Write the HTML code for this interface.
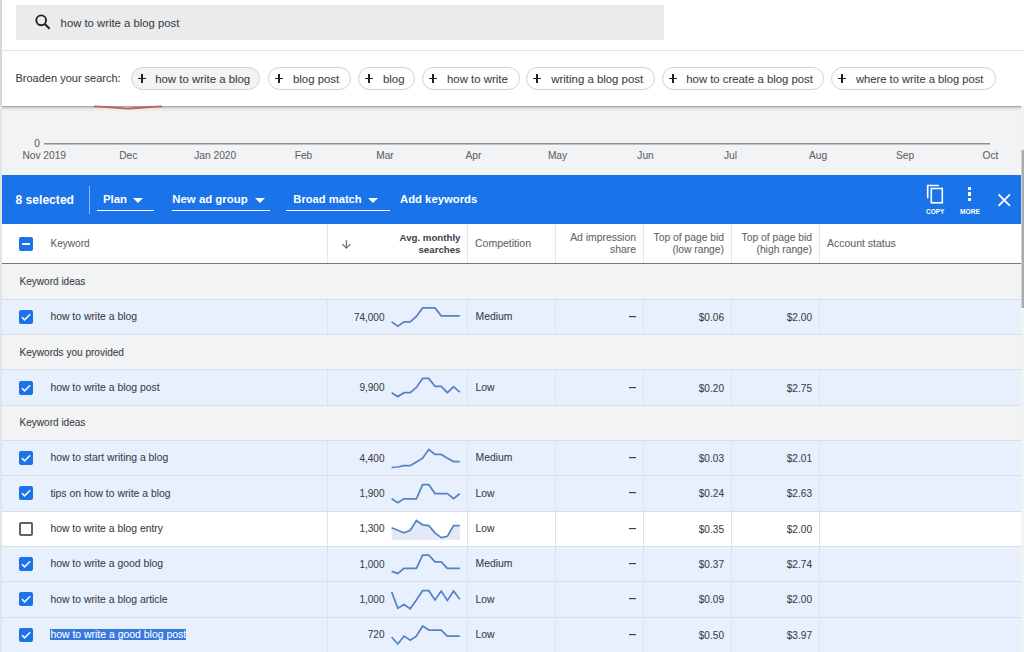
<!DOCTYPE html>
<html><head><meta charset="utf-8"><style>
html,body{margin:0;padding:0;}
body{width:1024px;height:652px;position:relative;overflow:hidden;background:#f1f3f4;font-family:"Liberation Sans",sans-serif;}
.t{position:absolute;line-height:1;white-space:nowrap;}
.n{-webkit-text-stroke:0.08px currentColor;}
.r{position:absolute;}
</style></head><body>
<div class="r" style="left:0px;top:0px;width:1024px;height:107px;background:#ffffff;"></div>
<div class="r" style="left:16px;top:5px;width:648px;height:35px;background:#e9ebed;"></div>
<svg class="r" style="left:33px;top:12px" width="20" height="20" viewBox="0 0 20 20"><circle cx="8.2" cy="8.3" r="4.9" fill="none" stroke="#202124" stroke-width="1.9"/><path d="M11.6 11.7 L16.6 16.7" stroke="#202124" stroke-width="2.1" stroke-linecap="butt"/></svg>
<div class="t n" style="left:60.60px;top:17.53px;font-size:11.3px;color:#3c4043;font-weight:400;">how to write a blog post</div>
<div class="r" style="left:2px;top:50px;width:1022px;height:1px;background:#e3e3e3;"></div>
<div class="t n" style="left:15.50px;top:73.49px;font-size:11.0px;color:#3c4043;font-weight:400;">Broaden your search:</div>
<div class="r" style="left:131px;top:67px;width:127px;height:20.5px;border:1px solid #d0d2d5;border-radius:12px;background:#f1f3f4"></div>
<div class="r" style="left:138.2px;top:77.7px;width:8.2px;height:1.6px;background:#202124;"></div>
<div class="r" style="left:141.4px;top:74.4px;width:1.6px;height:8.2px;background:#202124;"></div>
<div class="t n" style="left:155.20px;top:73.55px;font-size:11.4px;color:#3c4043;font-weight:400;">how to write a blog</div>
<div class="r" style="left:268px;top:67px;width:81px;height:20.5px;border:1px solid #d0d2d5;border-radius:12px;background:#ffffff"></div>
<div class="r" style="left:275.2px;top:77.7px;width:8.2px;height:1.6px;background:#202124;"></div>
<div class="r" style="left:278.4px;top:74.4px;width:1.6px;height:8.2px;background:#202124;"></div>
<div class="t n" style="left:293.00px;top:73.55px;font-size:11.4px;color:#3c4043;font-weight:400;">blog post</div>
<div class="r" style="left:358px;top:67px;width:55px;height:20.5px;border:1px solid #d0d2d5;border-radius:12px;background:#ffffff"></div>
<div class="r" style="left:365.2px;top:77.7px;width:8.2px;height:1.6px;background:#202124;"></div>
<div class="r" style="left:368.4px;top:74.4px;width:1.6px;height:8.2px;background:#202124;"></div>
<div class="t n" style="left:383.00px;top:73.55px;font-size:11.4px;color:#3c4043;font-weight:400;">blog</div>
<div class="r" style="left:422px;top:67px;width:96px;height:20.5px;border:1px solid #d0d2d5;border-radius:12px;background:#ffffff"></div>
<div class="r" style="left:429.2px;top:77.7px;width:8.2px;height:1.6px;background:#202124;"></div>
<div class="r" style="left:432.4px;top:74.4px;width:1.6px;height:8.2px;background:#202124;"></div>
<div class="t n" style="left:447.00px;top:73.55px;font-size:11.4px;color:#3c4043;font-weight:400;">how to write</div>
<div class="r" style="left:526px;top:67px;width:127px;height:20.5px;border:1px solid #d0d2d5;border-radius:12px;background:#ffffff"></div>
<div class="r" style="left:533.2px;top:77.7px;width:8.2px;height:1.6px;background:#202124;"></div>
<div class="r" style="left:536.4px;top:74.4px;width:1.6px;height:8.2px;background:#202124;"></div>
<div class="t n" style="left:551.30px;top:73.55px;font-size:11.4px;color:#3c4043;font-weight:400;">writing a blog post</div>
<div class="r" style="left:662px;top:67px;width:160px;height:20.5px;border:1px solid #d0d2d5;border-radius:12px;background:#ffffff"></div>
<div class="r" style="left:669.2px;top:77.7px;width:8.2px;height:1.6px;background:#202124;"></div>
<div class="r" style="left:672.4px;top:74.4px;width:1.6px;height:8.2px;background:#202124;"></div>
<div class="t n" style="left:686.30px;top:73.61px;font-size:11.33px;color:#3c4043;font-weight:400;">how to create a blog post</div>
<div class="r" style="left:831px;top:67px;width:163px;height:20.5px;border:1px solid #d0d2d5;border-radius:12px;background:#ffffff"></div>
<div class="r" style="left:838.2px;top:77.7px;width:8.2px;height:1.6px;background:#202124;"></div>
<div class="r" style="left:841.4px;top:74.4px;width:1.6px;height:8.2px;background:#202124;"></div>
<div class="t n" style="left:856.00px;top:73.72px;font-size:11.2px;color:#3c4043;font-weight:400;">where to write a blog post</div>
<div class="r" style="left:0px;top:106px;width:1024px;height:69px;background:#f1f3f4;"></div>
<div class="r" style="left:2px;top:106px;width:1022px;height:1px;background:#a6a7a9;"></div>
<div class="r" style="left:2px;top:107px;width:1022px;height:1px;background:#cbcccd;"></div>
<div class="r" style="left:2px;top:108px;width:1022px;height:1px;background:#dedfe0;"></div>
<div class="r" style="left:2px;top:109px;width:1022px;height:1px;background:#e8e9ea;"></div>
<div class="r" style="left:2px;top:110px;width:1022px;height:1px;background:#edeeef;"></div>
<svg class="r" style="left:0;top:100px" width="200" height="12"><path d="M94 6.4 C112 6.6 120 8.6 128.4 8.6 C137 8.6 145 6.6 162 6.4" fill="none" stroke="#c9504c" stroke-width="1.9" stroke-opacity="0.9"/></svg>
<div class="r" style="left:44px;top:143px;width:946px;height:1px;background:#8c8f93;"></div>
<div class="r" style="left:44px;top:144px;width:946px;height:1px;background:rgba(140,143,147,0.5);"></div>
<div class="t n" style="left:34.30px;top:139.17px;font-size:10.2px;color:#5f6368;font-weight:400;">0</div>
<div class="t n" style="left:-155.80px;width:400px;text-align:center;top:150.97px;font-size:10.2px;color:#5f6368;font-weight:400;">Nov 2019</div>
<div class="t n" style="left:-71.70px;width:400px;text-align:center;top:150.97px;font-size:10.2px;color:#5f6368;font-weight:400;">Dec</div>
<div class="t n" style="left:15.20px;width:400px;text-align:center;top:150.97px;font-size:10.2px;color:#5f6368;font-weight:400;">Jan 2020</div>
<div class="t n" style="left:103.50px;width:400px;text-align:center;top:150.97px;font-size:10.2px;color:#5f6368;font-weight:400;">Feb</div>
<div class="t n" style="left:185.00px;width:400px;text-align:center;top:150.97px;font-size:10.2px;color:#5f6368;font-weight:400;">Mar</div>
<div class="t n" style="left:273.50px;width:400px;text-align:center;top:150.97px;font-size:10.2px;color:#5f6368;font-weight:400;">Apr</div>
<div class="t n" style="left:357.50px;width:400px;text-align:center;top:150.97px;font-size:10.2px;color:#5f6368;font-weight:400;">May</div>
<div class="t n" style="left:445.50px;width:400px;text-align:center;top:150.97px;font-size:10.2px;color:#5f6368;font-weight:400;">Jun</div>
<div class="t n" style="left:530.50px;width:400px;text-align:center;top:150.97px;font-size:10.2px;color:#5f6368;font-weight:400;">Jul</div>
<div class="t n" style="left:618.00px;width:400px;text-align:center;top:150.97px;font-size:10.2px;color:#5f6368;font-weight:400;">Aug</div>
<div class="t n" style="left:705.00px;width:400px;text-align:center;top:150.97px;font-size:10.2px;color:#5f6368;font-weight:400;">Sep</div>
<div class="t n" style="left:790.50px;width:400px;text-align:center;top:150.97px;font-size:10.2px;color:#5f6368;font-weight:400;">Oct</div>
<div class="r" style="left:2px;top:175px;width:1019px;height:49px;background:#1a73e8;"></div>
<div class="t" style="left:15.50px;top:194.06px;font-size:12.1px;color:#ffffff;font-weight:700;">8 selected</div>
<div class="r" style="left:89px;top:186px;width:1.2px;height:28px;background:rgba(255,255,255,0.5);"></div>
<div class="t" style="left:103.00px;top:193.85px;font-size:11.4px;color:#ffffff;font-weight:700;">Plan</div>
<div class="r" style="left:132.8px;top:197.8px;width:0;height:0;border-left:5px solid transparent;border-right:5px solid transparent;border-top:5px solid #fff"></div>
<div class="r" style="left:96.5px;top:209.5px;width:57.5px;height:1.2px;background:#ffffff;"></div>
<div class="t" style="left:172.30px;top:193.85px;font-size:11.4px;color:#ffffff;font-weight:700;">New ad group</div>
<div class="r" style="left:254.6px;top:197.8px;width:0;height:0;border-left:5px solid transparent;border-right:5px solid transparent;border-top:5px solid #fff"></div>
<div class="r" style="left:171.5px;top:209.5px;width:98.5px;height:1.2px;background:#ffffff;"></div>
<div class="t" style="left:293.30px;top:194.02px;font-size:11.2px;color:#ffffff;font-weight:700;">Broad match</div>
<div class="r" style="left:367.6px;top:197.8px;width:0;height:0;border-left:5px solid transparent;border-right:5px solid transparent;border-top:5px solid #fff"></div>
<div class="r" style="left:286px;top:209.5px;width:104px;height:1.2px;background:#ffffff;"></div>
<div class="t" style="left:400.00px;top:194.43px;font-size:11.3px;color:#ffffff;font-weight:700;">Add keywords</div>
<svg class="r" style="left:924px;top:183px" width="22" height="22" viewBox="0 0 22 22"><path d="M3.7 15.2 V2.5 H14.9" fill="none" stroke="#fff" stroke-width="1.6"/><rect x="7.3" y="5.5" width="11" height="14.3" fill="none" stroke="#fff" stroke-width="1.6"/></svg>
<div class="t" style="left:735.20px;width:400px;text-align:center;top:209.30px;font-size:6.5px;color:#ffffff;font-weight:700;">COPY</div>
<div class="r" style="left:968.2px;top:186.70000000000002px;width:3.2px;height:3.2px;background:#ffffff;"></div>
<div class="r" style="left:968.2px;top:192.4px;width:3.2px;height:3.2px;background:#ffffff;"></div>
<div class="r" style="left:968.2px;top:198.1px;width:3.2px;height:3.2px;background:#ffffff;"></div>
<div class="t" style="left:770.00px;width:400px;text-align:center;top:209.21px;font-size:6.6px;color:#ffffff;font-weight:700;">MORE</div>
<svg class="r" style="left:996px;top:192px" width="16" height="16" viewBox="0 0 16 16"><path d="M2.5 2.3 L14 13.8 M14 2.3 L2.5 13.8" stroke="#fff" stroke-width="1.8"/></svg>
<div class="r" style="left:2px;top:224px;width:1019px;height:39px;background:#ffffff;"></div>
<div class="r" style="left:2px;top:262.5px;width:1019px;height:1.8px;background:#74777b;"></div>
<div class="r" style="left:327px;top:224px;width:1px;height:38.5px;background:#e4e6e8;"></div>
<div class="r" style="left:467px;top:224px;width:1px;height:38.5px;background:#e4e6e8;"></div>
<div class="r" style="left:555px;top:224px;width:1px;height:38.5px;background:#e4e6e8;"></div>
<div class="r" style="left:643px;top:224px;width:1px;height:38.5px;background:#e4e6e8;"></div>
<div class="r" style="left:731px;top:224px;width:1px;height:38.5px;background:#e4e6e8;"></div>
<div class="r" style="left:819px;top:224px;width:1px;height:38.5px;background:#e4e6e8;"></div>
<div class="r" style="left:19px;top:237px;width:14px;height:14px;background:#1a73e8;border-radius:2px"></div>
<div class="r" style="left:22px;top:243px;width:8px;height:2px;background:#ffffff;"></div>
<div class="t n" style="left:50.50px;top:238.79px;font-size:10.05px;color:#5f6368;font-weight:400;">Keyword</div>
<svg class="r" style="left:340px;top:238px" width="12" height="12" viewBox="0 0 12 12"><path d="M6.4 2.3 V10.2 M2.3 6.1 L6.4 10.2 L10.5 6.1" fill="none" stroke="#6f7378" stroke-width="1.3"/></svg>
<div class="t" style="left:60.50px;width:400px;text-align:right;top:233.39px;font-size:9.7px;color:#3c4043;font-weight:700;">Avg. monthly</div>
<div class="t" style="left:60.50px;width:400px;text-align:right;top:244.99px;font-size:9.7px;color:#3c4043;font-weight:700;">searches</div>
<div class="t n" style="left:475.00px;top:238.41px;font-size:10.5px;color:#5f6368;font-weight:400;">Competition</div>
<div class="t n" style="left:236.00px;width:400px;text-align:right;top:232.80px;font-size:10.4px;color:#5f6368;font-weight:400;">Ad impression</div>
<div class="t n" style="left:236.00px;width:400px;text-align:right;top:244.50px;font-size:10.4px;color:#5f6368;font-weight:400;">share</div>
<div class="t n" style="left:324.00px;width:400px;text-align:right;top:232.88px;font-size:10.3px;color:#5f6368;font-weight:400;">Top of page bid</div>
<div class="t n" style="left:324.00px;width:400px;text-align:right;top:244.58px;font-size:10.3px;color:#5f6368;font-weight:400;">(low range)</div>
<div class="t n" style="left:412.00px;width:400px;text-align:right;top:232.88px;font-size:10.3px;color:#5f6368;font-weight:400;">Top of page bid</div>
<div class="t n" style="left:412.00px;width:400px;text-align:right;top:244.58px;font-size:10.3px;color:#5f6368;font-weight:400;">(high range)</div>
<div class="t n" style="left:827.00px;top:238.41px;font-size:10.5px;color:#5f6368;font-weight:400;">Account status</div>
<div class="r" style="left:2px;top:264px;width:1019px;height:35px;background:#f1f3f4;"></div>
<div class="t n" style="left:19.50px;top:277.23px;font-size:10.06px;color:#3c4043;font-weight:400;">Keyword ideas</div>
<div class="r" style="left:2px;top:299px;width:1019px;height:35px;background:#e8f0fe;"></div>
<div class="r" style="left:2px;top:299px;width:1019px;height:1px;background:#d9dee6;"></div>
<div class="r" style="left:327px;top:299px;width:1px;height:35px;background:#dde3ec;"></div>
<div class="r" style="left:467px;top:299px;width:1px;height:35px;background:#dde3ec;"></div>
<div class="r" style="left:555px;top:299px;width:1px;height:35px;background:#dde3ec;"></div>
<div class="r" style="left:643px;top:299px;width:1px;height:35px;background:#dde3ec;"></div>
<div class="r" style="left:731px;top:299px;width:1px;height:35px;background:#dde3ec;"></div>
<div class="r" style="left:819px;top:299px;width:1px;height:35px;background:#dde3ec;"></div>
<div class="r" style="left:19px;top:309.95px;width:14px;height:14px;background:#1a73e8;border-radius:2px"></div>
<svg class="r" style="left:19px;top:309.95px" width="14" height="14" viewBox="0 0 14 14"><path d="M2.9 7.1 L5.6 9.8 L11.2 4.2" fill="none" stroke="#f4f8ff" stroke-width="1.55"/></svg>
<div class="t n" style="left:50.40px;top:312.25px;font-size:10.4px;color:#3c4043;font-weight:400;">how to write a blog</div>
<div class="t n" style="left:-15.50px;width:400px;text-align:right;top:312.59px;font-size:10px;color:#3c4043;font-weight:400;">74,000</div>
<div class="t n" style="left:475.50px;top:312.25px;font-size:10.4px;color:#3c4043;font-weight:400;">Medium</div>
<div class="r" style="left:628.5px;top:316px;width:7.5px;height:1px;background:#3c3e42;"></div>
<div class="r" style="left:628.5px;top:317px;width:7.5px;height:1px;background:rgba(32,33,36,0.15);"></div>
<div class="t n" style="left:324.00px;width:400px;text-align:right;top:312.90px;font-size:10.1px;color:#3c4043;font-weight:400;">$0.06</div>
<div class="t n" style="left:412.00px;width:400px;text-align:right;top:312.90px;font-size:10.1px;color:#3c4043;font-weight:400;">$2.00</div>
<div class="r" style="left:2px;top:334px;width:1019px;height:35px;background:#f1f3f4;"></div>
<div class="r" style="left:2px;top:334px;width:1019px;height:1px;background:#dcdfe3;"></div>
<div class="t n" style="left:19.50px;top:347.83px;font-size:10.06px;color:#3c4043;font-weight:400;">Keywords you provided</div>
<div class="r" style="left:2px;top:369px;width:1019px;height:36px;background:#e8f0fe;"></div>
<div class="r" style="left:2px;top:369px;width:1019px;height:1px;background:#d9dee6;"></div>
<div class="r" style="left:327px;top:369px;width:1px;height:36px;background:#dde3ec;"></div>
<div class="r" style="left:467px;top:369px;width:1px;height:36px;background:#dde3ec;"></div>
<div class="r" style="left:555px;top:369px;width:1px;height:36px;background:#dde3ec;"></div>
<div class="r" style="left:643px;top:369px;width:1px;height:36px;background:#dde3ec;"></div>
<div class="r" style="left:731px;top:369px;width:1px;height:36px;background:#dde3ec;"></div>
<div class="r" style="left:819px;top:369px;width:1px;height:36px;background:#dde3ec;"></div>
<div class="r" style="left:19px;top:380.55px;width:14px;height:14px;background:#1a73e8;border-radius:2px"></div>
<svg class="r" style="left:19px;top:380.55px" width="14" height="14" viewBox="0 0 14 14"><path d="M2.9 7.1 L5.6 9.8 L11.2 4.2" fill="none" stroke="#f4f8ff" stroke-width="1.55"/></svg>
<div class="t n" style="left:50.40px;top:382.85px;font-size:10.4px;color:#3c4043;font-weight:400;">how to write a blog post</div>
<div class="t n" style="left:-15.50px;width:400px;text-align:right;top:383.19px;font-size:10px;color:#3c4043;font-weight:400;">9,900</div>
<div class="t n" style="left:475.50px;top:382.85px;font-size:10.4px;color:#3c4043;font-weight:400;">Low</div>
<div class="r" style="left:628.5px;top:387px;width:7.5px;height:1px;background:#3c3e42;"></div>
<div class="r" style="left:628.5px;top:388px;width:7.5px;height:1px;background:rgba(32,33,36,0.15);"></div>
<div class="t n" style="left:324.00px;width:400px;text-align:right;top:383.50px;font-size:10.1px;color:#3c4043;font-weight:400;">$0.20</div>
<div class="t n" style="left:412.00px;width:400px;text-align:right;top:383.50px;font-size:10.1px;color:#3c4043;font-weight:400;">$2.75</div>
<div class="r" style="left:2px;top:405px;width:1019px;height:35px;background:#f1f3f4;"></div>
<div class="r" style="left:2px;top:405px;width:1019px;height:1px;background:#dcdfe3;"></div>
<div class="t n" style="left:19.50px;top:418.43px;font-size:10.06px;color:#3c4043;font-weight:400;">Keyword ideas</div>
<div class="r" style="left:2px;top:440px;width:1019px;height:35px;background:#e8f0fe;"></div>
<div class="r" style="left:2px;top:440px;width:1019px;height:1px;background:#d9dee6;"></div>
<div class="r" style="left:327px;top:440px;width:1px;height:35px;background:#dde3ec;"></div>
<div class="r" style="left:467px;top:440px;width:1px;height:35px;background:#dde3ec;"></div>
<div class="r" style="left:555px;top:440px;width:1px;height:35px;background:#dde3ec;"></div>
<div class="r" style="left:643px;top:440px;width:1px;height:35px;background:#dde3ec;"></div>
<div class="r" style="left:731px;top:440px;width:1px;height:35px;background:#dde3ec;"></div>
<div class="r" style="left:819px;top:440px;width:1px;height:35px;background:#dde3ec;"></div>
<div class="r" style="left:19px;top:451.15px;width:14px;height:14px;background:#1a73e8;border-radius:2px"></div>
<svg class="r" style="left:19px;top:451.15px" width="14" height="14" viewBox="0 0 14 14"><path d="M2.9 7.1 L5.6 9.8 L11.2 4.2" fill="none" stroke="#f4f8ff" stroke-width="1.55"/></svg>
<div class="t n" style="left:50.40px;top:453.45px;font-size:10.4px;color:#3c4043;font-weight:400;">how to start writing a blog</div>
<div class="t n" style="left:-15.50px;width:400px;text-align:right;top:453.79px;font-size:10px;color:#3c4043;font-weight:400;">4,400</div>
<div class="t n" style="left:475.50px;top:453.45px;font-size:10.4px;color:#3c4043;font-weight:400;">Medium</div>
<div class="r" style="left:628.5px;top:457px;width:7.5px;height:1px;background:#3c3e42;"></div>
<div class="r" style="left:628.5px;top:458px;width:7.5px;height:1px;background:rgba(32,33,36,0.15);"></div>
<div class="t n" style="left:324.00px;width:400px;text-align:right;top:454.10px;font-size:10.1px;color:#3c4043;font-weight:400;">$0.03</div>
<div class="t n" style="left:412.00px;width:400px;text-align:right;top:454.10px;font-size:10.1px;color:#3c4043;font-weight:400;">$2.01</div>
<div class="r" style="left:2px;top:475px;width:1019px;height:36px;background:#e8f0fe;"></div>
<div class="r" style="left:2px;top:475px;width:1019px;height:1px;background:#d9dee6;"></div>
<div class="r" style="left:327px;top:475px;width:1px;height:36px;background:#dde3ec;"></div>
<div class="r" style="left:467px;top:475px;width:1px;height:36px;background:#dde3ec;"></div>
<div class="r" style="left:555px;top:475px;width:1px;height:36px;background:#dde3ec;"></div>
<div class="r" style="left:643px;top:475px;width:1px;height:36px;background:#dde3ec;"></div>
<div class="r" style="left:731px;top:475px;width:1px;height:36px;background:#dde3ec;"></div>
<div class="r" style="left:819px;top:475px;width:1px;height:36px;background:#dde3ec;"></div>
<div class="r" style="left:19px;top:486.45px;width:14px;height:14px;background:#1a73e8;border-radius:2px"></div>
<svg class="r" style="left:19px;top:486.45px" width="14" height="14" viewBox="0 0 14 14"><path d="M2.9 7.1 L5.6 9.8 L11.2 4.2" fill="none" stroke="#f4f8ff" stroke-width="1.55"/></svg>
<div class="t n" style="left:50.40px;top:488.75px;font-size:10.4px;color:#3c4043;font-weight:400;">tips on how to write a blog</div>
<div class="t n" style="left:-15.50px;width:400px;text-align:right;top:489.08px;font-size:10px;color:#3c4043;font-weight:400;">1,900</div>
<div class="t n" style="left:475.50px;top:488.75px;font-size:10.4px;color:#3c4043;font-weight:400;">Low</div>
<div class="r" style="left:628.5px;top:492px;width:7.5px;height:1px;background:#3c3e42;"></div>
<div class="r" style="left:628.5px;top:493px;width:7.5px;height:1px;background:rgba(32,33,36,0.15);"></div>
<div class="t n" style="left:324.00px;width:400px;text-align:right;top:489.40px;font-size:10.1px;color:#3c4043;font-weight:400;">$0.24</div>
<div class="t n" style="left:412.00px;width:400px;text-align:right;top:489.40px;font-size:10.1px;color:#3c4043;font-weight:400;">$2.63</div>
<div class="r" style="left:2px;top:511px;width:1019px;height:35px;background:#ffffff;"></div>
<div class="r" style="left:2px;top:511px;width:1019px;height:1px;background:#d9dee6;"></div>
<div class="r" style="left:327px;top:511px;width:1px;height:35px;background:#dde3ec;"></div>
<div class="r" style="left:467px;top:511px;width:1px;height:35px;background:#dde3ec;"></div>
<div class="r" style="left:555px;top:511px;width:1px;height:35px;background:#dde3ec;"></div>
<div class="r" style="left:643px;top:511px;width:1px;height:35px;background:#dde3ec;"></div>
<div class="r" style="left:731px;top:511px;width:1px;height:35px;background:#dde3ec;"></div>
<div class="r" style="left:819px;top:511px;width:1px;height:35px;background:#dde3ec;"></div>
<div class="r" style="left:19px;top:521.75px;width:10px;height:10px;border:2px solid #5f6368;border-radius:2px"></div>
<div class="t n" style="left:50.40px;top:524.05px;font-size:10.4px;color:#3c4043;font-weight:400;">how to write a blog entry</div>
<div class="t n" style="left:-15.50px;width:400px;text-align:right;top:524.38px;font-size:10px;color:#3c4043;font-weight:400;">1,300</div>
<div class="t n" style="left:475.50px;top:524.05px;font-size:10.4px;color:#3c4043;font-weight:400;">Low</div>
<div class="r" style="left:628.5px;top:528px;width:7.5px;height:1px;background:#3c3e42;"></div>
<div class="r" style="left:628.5px;top:529px;width:7.5px;height:1px;background:rgba(32,33,36,0.15);"></div>
<div class="t n" style="left:324.00px;width:400px;text-align:right;top:524.70px;font-size:10.1px;color:#3c4043;font-weight:400;">$0.35</div>
<div class="t n" style="left:412.00px;width:400px;text-align:right;top:524.70px;font-size:10.1px;color:#3c4043;font-weight:400;">$2.00</div>
<div class="r" style="left:2px;top:546px;width:1019px;height:35px;background:#e8f0fe;"></div>
<div class="r" style="left:2px;top:546px;width:1019px;height:1px;background:#d9dee6;"></div>
<div class="r" style="left:327px;top:546px;width:1px;height:35px;background:#dde3ec;"></div>
<div class="r" style="left:467px;top:546px;width:1px;height:35px;background:#dde3ec;"></div>
<div class="r" style="left:555px;top:546px;width:1px;height:35px;background:#dde3ec;"></div>
<div class="r" style="left:643px;top:546px;width:1px;height:35px;background:#dde3ec;"></div>
<div class="r" style="left:731px;top:546px;width:1px;height:35px;background:#dde3ec;"></div>
<div class="r" style="left:819px;top:546px;width:1px;height:35px;background:#dde3ec;"></div>
<div class="r" style="left:19px;top:557.05px;width:14px;height:14px;background:#1a73e8;border-radius:2px"></div>
<svg class="r" style="left:19px;top:557.05px" width="14" height="14" viewBox="0 0 14 14"><path d="M2.9 7.1 L5.6 9.8 L11.2 4.2" fill="none" stroke="#f4f8ff" stroke-width="1.55"/></svg>
<div class="t n" style="left:50.40px;top:559.35px;font-size:10.4px;color:#3c4043;font-weight:400;">how to write a good blog</div>
<div class="t n" style="left:-15.50px;width:400px;text-align:right;top:559.68px;font-size:10px;color:#3c4043;font-weight:400;">1,000</div>
<div class="t n" style="left:475.50px;top:559.35px;font-size:10.4px;color:#3c4043;font-weight:400;">Medium</div>
<div class="r" style="left:628.5px;top:563px;width:7.5px;height:1px;background:#3c3e42;"></div>
<div class="r" style="left:628.5px;top:564px;width:7.5px;height:1px;background:rgba(32,33,36,0.15);"></div>
<div class="t n" style="left:324.00px;width:400px;text-align:right;top:560.00px;font-size:10.1px;color:#3c4043;font-weight:400;">$0.37</div>
<div class="t n" style="left:412.00px;width:400px;text-align:right;top:560.00px;font-size:10.1px;color:#3c4043;font-weight:400;">$2.74</div>
<div class="r" style="left:2px;top:581px;width:1019px;height:36px;background:#e8f0fe;"></div>
<div class="r" style="left:2px;top:581px;width:1019px;height:1px;background:#d9dee6;"></div>
<div class="r" style="left:327px;top:581px;width:1px;height:36px;background:#dde3ec;"></div>
<div class="r" style="left:467px;top:581px;width:1px;height:36px;background:#dde3ec;"></div>
<div class="r" style="left:555px;top:581px;width:1px;height:36px;background:#dde3ec;"></div>
<div class="r" style="left:643px;top:581px;width:1px;height:36px;background:#dde3ec;"></div>
<div class="r" style="left:731px;top:581px;width:1px;height:36px;background:#dde3ec;"></div>
<div class="r" style="left:819px;top:581px;width:1px;height:36px;background:#dde3ec;"></div>
<div class="r" style="left:19px;top:592.35px;width:14px;height:14px;background:#1a73e8;border-radius:2px"></div>
<svg class="r" style="left:19px;top:592.35px" width="14" height="14" viewBox="0 0 14 14"><path d="M2.9 7.1 L5.6 9.8 L11.2 4.2" fill="none" stroke="#f4f8ff" stroke-width="1.55"/></svg>
<div class="t n" style="left:50.40px;top:594.65px;font-size:10.4px;color:#3c4043;font-weight:400;">how to write a blog article</div>
<div class="t n" style="left:-15.50px;width:400px;text-align:right;top:594.99px;font-size:10px;color:#3c4043;font-weight:400;">1,000</div>
<div class="t n" style="left:475.50px;top:594.65px;font-size:10.4px;color:#3c4043;font-weight:400;">Low</div>
<div class="r" style="left:628.5px;top:598px;width:7.5px;height:1px;background:#3c3e42;"></div>
<div class="r" style="left:628.5px;top:599px;width:7.5px;height:1px;background:rgba(32,33,36,0.15);"></div>
<div class="t n" style="left:324.00px;width:400px;text-align:right;top:595.30px;font-size:10.1px;color:#3c4043;font-weight:400;">$0.09</div>
<div class="t n" style="left:412.00px;width:400px;text-align:right;top:595.30px;font-size:10.1px;color:#3c4043;font-weight:400;">$2.00</div>
<div class="r" style="left:2px;top:617px;width:1019px;height:35px;background:#e8f0fe;"></div>
<div class="r" style="left:2px;top:617px;width:1019px;height:1px;background:#d9dee6;"></div>
<div class="r" style="left:327px;top:617px;width:1px;height:35px;background:#dde3ec;"></div>
<div class="r" style="left:467px;top:617px;width:1px;height:35px;background:#dde3ec;"></div>
<div class="r" style="left:555px;top:617px;width:1px;height:35px;background:#dde3ec;"></div>
<div class="r" style="left:643px;top:617px;width:1px;height:35px;background:#dde3ec;"></div>
<div class="r" style="left:731px;top:617px;width:1px;height:35px;background:#dde3ec;"></div>
<div class="r" style="left:819px;top:617px;width:1px;height:35px;background:#dde3ec;"></div>
<div class="r" style="left:19px;top:627.65px;width:14px;height:14px;background:#1a73e8;border-radius:2px"></div>
<svg class="r" style="left:19px;top:627.65px" width="14" height="14" viewBox="0 0 14 14"><path d="M2.9 7.1 L5.6 9.8 L11.2 4.2" fill="none" stroke="#f4f8ff" stroke-width="1.55"/></svg>
<div class="r" style="left:50px;top:629px;width:136px;height:11.3px;background:#3578de;"></div>
<div class="t n" style="left:50.40px;top:629.90px;font-size:10.45px;color:#ffffff;font-weight:400;">how to write a good blog post</div>
<div class="t n" style="left:-15.50px;width:400px;text-align:right;top:630.28px;font-size:10px;color:#3c4043;font-weight:400;">720</div>
<div class="t n" style="left:475.50px;top:629.95px;font-size:10.4px;color:#3c4043;font-weight:400;">Low</div>
<div class="r" style="left:628.5px;top:634px;width:7.5px;height:1px;background:#3c3e42;"></div>
<div class="r" style="left:628.5px;top:635px;width:7.5px;height:1px;background:rgba(32,33,36,0.15);"></div>
<div class="t n" style="left:324.00px;width:400px;text-align:right;top:630.60px;font-size:10.1px;color:#3c4043;font-weight:400;">$0.50</div>
<div class="t n" style="left:412.00px;width:400px;text-align:right;top:630.60px;font-size:10.1px;color:#3c4043;font-weight:400;">$3.97</div>
<svg class="r" style="left:0;top:0" width="1024" height="652" viewBox="0 0 1024 652"><polygon points="391.6,527.8 397.8,530.3 404.0,532.9 410.2,530.3 416.4,520.5 422.6,524.8 428.8,525.6 435.0,532.9 441.2,537.6 447.4,536.3 453.6,525.6 459.8,525.6 459.8,539.7 391.6,539.7" fill="#e3e9f6"/><polyline points="391.6,321.9 397.8,326.2 404.0,321.9 410.2,321.9 416.4,316.5 422.6,307.9 428.8,307.9 435.0,307.9 441.2,315.8 447.4,315.8 453.6,315.8 459.8,315.8" fill="none" stroke="#5683c6" stroke-width="1.75" stroke-linejoin="miter"/><polyline points="391.6,392.7 397.8,396.6 404.0,392.7 410.2,392.7 416.4,387.4 422.6,378.4 428.8,378.4 435.0,386.3 441.2,386.3 447.4,392.7 453.6,386.7 459.8,392.1" fill="none" stroke="#5683c6" stroke-width="1.75" stroke-linejoin="miter"/><polyline points="391.6,467.5 397.8,467.0 404.0,465.7 410.2,465.7 416.4,462.0 422.6,458.2 428.8,449.6 435.0,454.4 441.2,454.4 447.4,458.2 453.6,461.6 459.8,461.6" fill="none" stroke="#5683c6" stroke-width="1.75" stroke-linejoin="miter"/><polyline points="391.6,498.8 397.8,502.8 404.0,498.8 410.2,498.8 416.4,498.8 422.6,484.7 428.8,484.7 435.0,493.5 441.2,493.5 447.4,493.5 453.6,498.6 459.8,493.7" fill="none" stroke="#5683c6" stroke-width="1.75" stroke-linejoin="miter"/><polyline points="391.6,527.8 397.8,530.3 404.0,532.9 410.2,530.3 416.4,520.5 422.6,524.8 428.8,525.6 435.0,532.9 441.2,537.6 447.4,536.3 453.6,525.6 459.8,525.6" fill="none" stroke="#5683c6" stroke-width="1.75" stroke-linejoin="miter"/><polyline points="391.6,571.3 397.8,573.4 404.0,568.3 410.2,568.3 416.4,568.3 422.6,555.2 428.8,555.2 435.0,561.9 441.2,561.9 447.4,568.3 453.6,568.3 459.8,568.3" fill="none" stroke="#5683c6" stroke-width="1.75" stroke-linejoin="miter"/><polyline points="391.6,591.8 397.8,608.2 404.0,604.5 410.2,608.7 416.4,600.0 422.6,590.7 428.8,590.7 435.0,600.0 441.2,591.0 447.4,600.5 453.6,591.0 459.8,599.2" fill="none" stroke="#5683c6" stroke-width="1.75" stroke-linejoin="miter"/><polyline points="391.6,637.0 397.8,644.0 404.0,636.1 410.2,640.3 416.4,636.1 422.6,626.0 428.8,630.1 435.0,630.1 441.2,630.1 447.4,636.1 453.6,636.1 459.8,636.1" fill="none" stroke="#5683c6" stroke-width="1.75" stroke-linejoin="miter"/></svg>
<div class="r" style="left:0px;top:0px;width:2px;height:106px;background:#d8d8d8;"></div>
<div class="r" style="left:0px;top:106px;width:2px;height:546px;background:#e3e4e5;"></div>
<div class="r" style="left:1021px;top:106px;width:3px;height:546px;background:#f2f2f4;"></div>
<div class="r" style="left:1021px;top:150px;width:1px;height:158px;background:#d2d2d2;"></div>
<div class="r" style="left:1022px;top:150px;width:2px;height:158px;background:#ababab;"></div>
</body></html>
